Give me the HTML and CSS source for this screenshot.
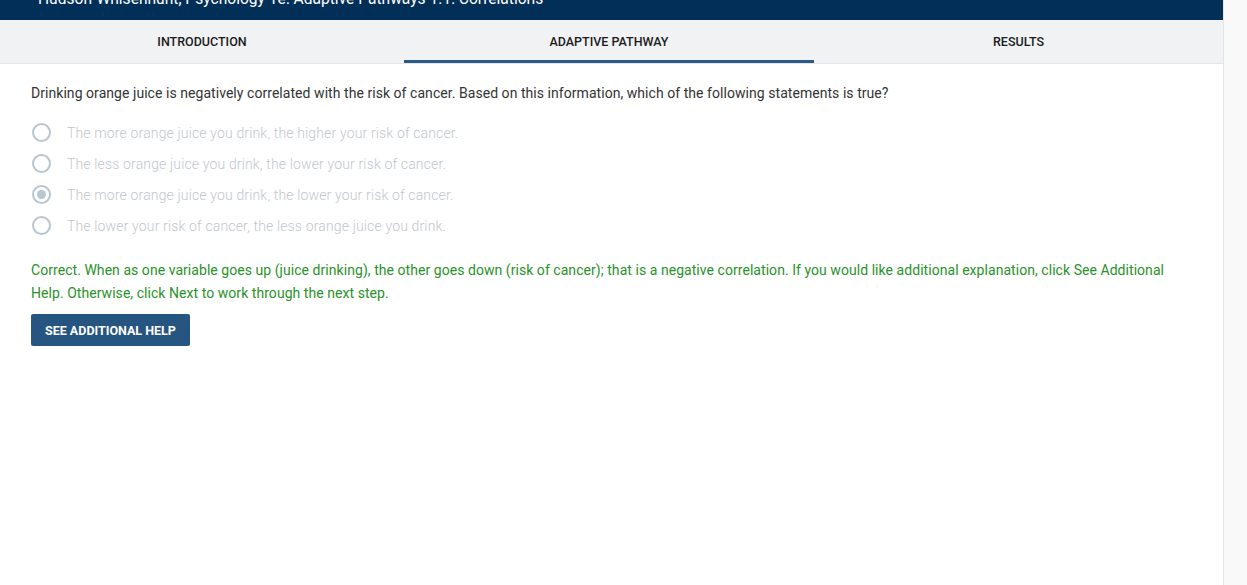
FILE: index.html
```html
<!DOCTYPE html>
<html lang="en">
<head>
<meta charset="utf-8">
<title>Adaptive Pathway</title>
<link rel="stylesheet" href="styles.css">
</head>
<body>
<div class="page">
  <main class="main">
    <header class="topbar">
      <div class="topbar-title">Hudson-Whisenhunt, Psychology 1e: Adaptive Pathways 1.1: Correlations</div>
    </header>
    <nav class="tabs">
      <div class="tab">INTRODUCTION</div>
      <div class="tab tab-active">ADAPTIVE PATHWAY</div>
      <div class="tab">RESULTS</div>
    </nav>
    <section class="content">
      <p class="question">Drinking orange juice is negatively correlated with the risk of cancer. Based on this information, which of the following statements is true?</p>
      <ul class="options">
        <li class="option"><span class="radio"></span><span class="option-text">The more orange juice you drink, the higher your risk of cancer.</span></li>
        <li class="option"><span class="radio"></span><span class="option-text">The less orange juice you drink, the lower your risk of cancer.</span></li>
        <li class="option"><span class="radio radio-checked"></span><span class="option-text">The more orange juice you drink, the lower your risk of cancer.</span></li>
        <li class="option"><span class="radio"></span><span class="option-text">The lower your risk of cancer, the less orange juice you drink.</span></li>
      </ul>
      <p class="feedback">Correct. When as one variable goes up (juice drinking), the other goes down (risk of cancer); that is a negative correlation. If you would like additional explanation, click See Additional Help. Otherwise, click Next to work through the next step.</p>
      <button class="help-btn">SEE ADDITIONAL HELP</button>
    </section>
  </main>
  <aside class="scrollbar"></aside>
</div>
</body>
</html>
```

FILE: styles.css
```css
html, body {
  margin: 0;
  padding: 0;
  height: 100%;
  background: #ffffff;
  font-family: Roboto, "Liberation Sans", Arial, sans-serif;
}

.page {
  display: flex;
  height: 585px;
  overflow: hidden;
}

.main {
  flex: 1;
  display: flex;
  flex-direction: column;
  min-width: 0;
}

.scrollbar {
  width: 23px;
  background: #f9f9f9;
  border-left: 1px solid #e4e4e4;
}

.topbar {
  height: 20px;
  background: #022f57;
  overflow: hidden;
}

.topbar-title {
  margin-top: -11px;
  padding-left: 38px;
  color: #ffffff;
  font-size: 15.6px;
  line-height: 20px;
  white-space: nowrap;
}

.tabs {
  display: grid;
  grid-template-columns: 404px 410px 1fr;
  height: 43px;
  background: #f1f2f4;
  border-bottom: 1px solid #e3e5e8;
}

.tab {
  display: flex;
  align-items: center;
  justify-content: center;
  font-size: 12.5px;
  font-weight: 500;
  color: #1b1b1b;
  box-sizing: border-box;
  padding-bottom: 1px;
}

.tab-active {
  border-bottom: 3px solid #2b5a86;
  padding-top: 2px;
  padding-bottom: 0;
}

.content {
  padding: 0 31px;
}

.question {
  margin: 21px 0 0;
  font-size: 14px;
  line-height: 16px;
  color: #333333;
  letter-spacing: 0.05px;
}

.options {
  list-style: none;
  margin: 22px 0 0;
  padding: 0;
  display: flex;
  flex-direction: column;
  gap: 12px;
}

.option {
  display: flex;
  align-items: center;
  gap: 16px;
  height: 19px;
}

.radio {
  width: 15px;
  height: 15px;
  border: 2px solid #b9c5cf;
  border-radius: 50%;
  display: flex;
  align-items: center;
  justify-content: center;
  margin-left: 1px;
}

.radio-checked::after {
  content: "";
  width: 9px;
  height: 9px;
  border-radius: 50%;
  background: #b9c5cf;
}

.option-text {
  font-size: 14px;
  font-weight: 300;
  color: #bfc7ce;
  letter-spacing: 0.15px;
}

.feedback {
  margin: 24px 0 0;
  font-size: 14px;
  line-height: 23px;
  color: #2a922a;
  letter-spacing: 0.05px;
}

.help-btn {
  margin-top: 9px;
  height: 32px;
  padding: 0 14px;
  background: #255580;
  color: #ffffff;
  border: none;
  border-radius: 2px;
  font-family: Roboto, "Liberation Sans", Arial, sans-serif;
  font-size: 12.5px;
  font-weight: 700;
}
```
